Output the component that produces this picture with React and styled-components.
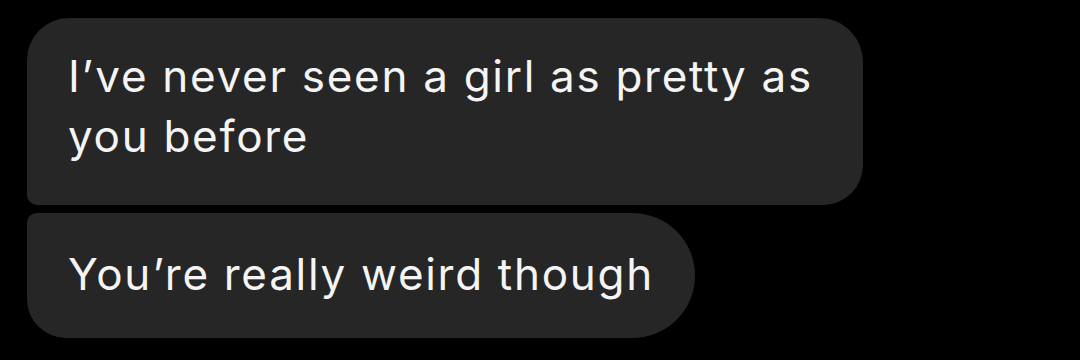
import React from 'react';
import styled, { createGlobalStyle } from 'styled-components';

const Global = createGlobalStyle`
  html, body {
    margin: 0;
    padding: 0;
    background: #000;
  }
`;

const Thread = styled.div`
  width: 1080px;
  height: 360px;
  box-sizing: border-box;
  padding: 18px 0 0 27px;
  display: flex;
  flex-direction: column;
  align-items: flex-start;
  gap: 8px;
  background: #000;
`;

const Bubble = styled.div`
  box-sizing: border-box;
  width: ${p => p.width}px;
  padding: ${p => p.pad};
  background: #262626;
  color: #f4f4f4;
  font-family: Inter, "Liberation Sans", sans-serif;
  font-size: 44px;
  line-height: 60px;
  letter-spacing: 1.7px;
  white-space: nowrap;
  border-radius: ${p => p.radius};
`;

export default function App() {
  return (
    <>
      <Global />
      <Thread>
        <Bubble width={836} pad="28px 40px 39px 41px" radius="42px 44px 40px 10px">
          I’ve never seen a girl as pretty as<br />you before
        </Bubble>
        <Bubble width={668} pad="31px 40px 34px 41px" radius="10px 64px 64px 40px">
          You’re really weird though
        </Bubble>
      </Thread>
    </>
  );
}
